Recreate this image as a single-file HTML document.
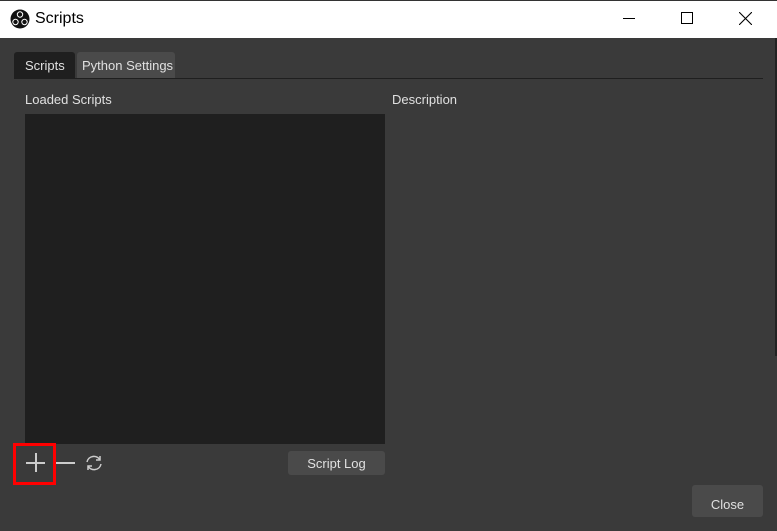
<!DOCTYPE html><html><head><style>
body{margin:0;width:777px;height:531px;background:#3a3a3a;font-family:"Liberation Sans",sans-serif;position:relative;overflow:hidden;font-size:13px;color:#e0e0e0}
.a{position:absolute}
</style></head><body>
<div class="a" style="left:0;top:0;width:777px;height:38px;background:#fff;border-top:1px solid #333;box-sizing:border-box"></div>
<svg class="a" style="left:10px;top:9px" width="20" height="20" viewBox="0 0 20 20"><circle cx="10" cy="10" r="9.5" fill="#111"/><circle cx="10" cy="5.5" r="3.2" fill="#fff"/><circle cx="5.5" cy="13" r="3.2" fill="#fff"/><circle cx="14.5" cy="13" r="3.2" fill="#fff"/><circle cx="10" cy="5.5" r="2.2" fill="#111"/><circle cx="5.5" cy="13" r="2.2" fill="#111"/><circle cx="14.5" cy="13" r="2.2" fill="#111"/></svg>
<div class="a" style="left:35px;top:10px;font-size:16px;color:#000">Scripts</div>
<div class="a" style="left:623px;top:18px;width:12px;height:1px;background:#000"></div>
<div class="a" style="left:681px;top:12px;width:10px;height:10px;border:1px solid #000"></div>
<svg class="a" style="left:739px;top:12px" width="13" height="13"><path d="M0 0L13 13M13 0L0 13" stroke="#000" stroke-width="1.1"/></svg>
<div class="a" style="left:14px;top:52px;width:61px;height:26px;background:#1f1f1f;border-radius:3px 3px 0 0"></div>
<div class="a" style="left:25px;top:58px">Scripts</div>
<div class="a" style="left:77px;top:52px;width:98px;height:26px;background:#4a4a4a;border-radius:3px 3px 0 0"></div>
<div class="a" style="left:82px;top:58px">Python Settings</div>
<div class="a" style="left:14px;top:78px;width:749px;height:1px;background:#1f1f1f"></div>
<div class="a" style="left:25px;top:92px">Loaded Scripts</div>
<div class="a" style="left:392px;top:92px">Description</div>
<div class="a" style="left:25px;top:114px;width:360px;height:330px;background:#1f1f1f"></div>
<div class="a" style="left:13px;top:443px;width:43px;height:42px;border:3px solid #f00;box-sizing:border-box"></div>
<div class="a" style="left:26px;top:462px;width:19px;height:1.5px;background:#ccc"></div>
<div class="a" style="left:35px;top:453px;width:1.5px;height:19px;background:#ccc"></div>
<div class="a" style="left:56px;top:462px;width:19px;height:1.5px;background:#ccc"></div>
<svg class="a" style="left:84px;top:454px" width="20" height="18" viewBox="0 0 20 18"><path d="M3 8A7 7 0 0 1 16 6M17 10A7 7 0 0 1 4 12" fill="none" stroke="#ccc" stroke-width="1.5"/><path d="M16 2V6H12M4 16V12H8" fill="none" stroke="#ccc" stroke-width="1.5"/></svg>
<div class="a" style="left:288px;top:451px;width:97px;height:24px;background:#4a4a4a;border-radius:3px;text-align:center;line-height:26px">Script Log</div>
<div class="a" style="left:692px;top:485px;width:71px;height:32px;background:#4a4a4a;border-radius:3px;text-align:center;line-height:40px">Close</div>
<div class="a" style="left:775px;top:38px;width:2px;height:318px;background:#222"></div>
</body></html>
